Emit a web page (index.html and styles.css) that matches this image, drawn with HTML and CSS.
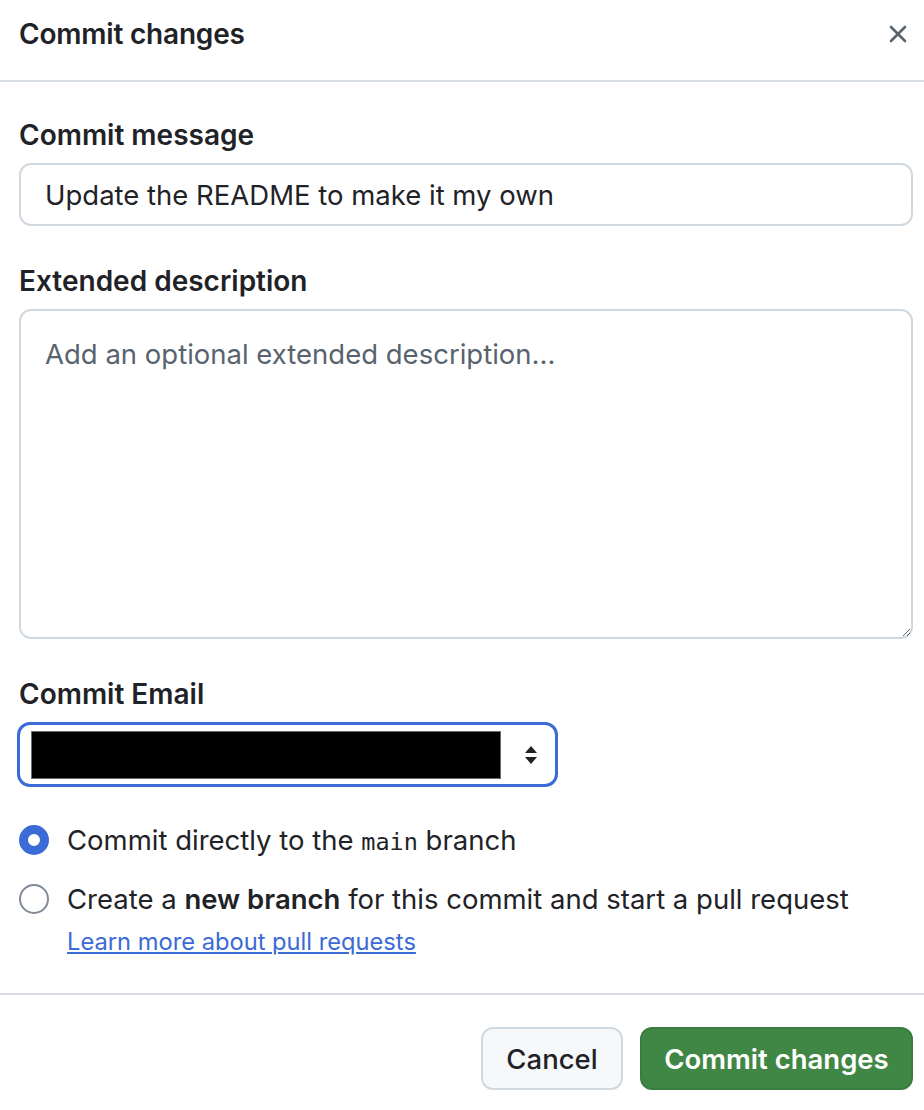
FILE: index.html
```html
<!DOCTYPE html>
<html lang="en">
<head>
<meta charset="utf-8">
<title>Commit changes</title>
<link rel="stylesheet" href="styles.css">
</head>
<body>
<div class="dialog">
  <header class="dialog-header">
    <h1 class="dialog-title">Commit changes</h1>
    <button class="close-btn" aria-label="Close">
      <svg width="20" height="20" viewBox="0 0 20 20" aria-hidden="true"><path d="M3 3 L17 17 M17 3 L3 17" stroke="#59636e" stroke-width="2.6" stroke-linecap="round" fill="none"/></svg>
    </button>
  </header>
  <div class="dialog-body">
    <div class="field">
      <label class="field-label" for="msg">Commit message</label>
      <input id="msg" class="text-input" type="text" value="Update the README to make it my own">
    </div>
    <div class="field">
      <label class="field-label" for="desc">Extended description</label>
      <textarea id="desc" class="text-area" placeholder="Add an optional extended description..."></textarea>
    </div>
    <div class="field">
      <label class="field-label">Commit Email</label>
      <div class="select">
        <span class="redacted"></span>
        <svg class="select-arrows" width="16" height="24" viewBox="0 0 16 24" aria-hidden="true"><path d="M8 3 L14 10 L2 10 Z M2 14 L14 14 L8 21 Z" fill="#1f2328"/></svg>
      </div>
    </div>
    <div class="choices">
      <div class="choice">
        <span class="radio radio-checked"></span>
        <span class="choice-text">Commit directly to the <code class="code">main</code> branch</span>
      </div>
      <div class="choice">
        <span class="radio"></span>
        <div class="choice-col">
          <span class="choice-text">Create a <strong>new branch</strong> for this commit and start a pull request</span>
          <a class="link" href="#">Learn more about pull requests</a>
        </div>
      </div>
    </div>
  </div>
  <footer class="dialog-footer">
    <button class="btn btn-default">Cancel</button>
    <button class="btn btn-primary">Commit changes</button>
  </footer>
</div>
</body>
</html>
```
FILE: styles.css
```css
* { box-sizing: border-box; }
html, body { margin: 0; padding: 0; background: #ffffff; }
body {
  font-family: Inter, "Liberation Sans", Arial, sans-serif;
  color: #1f2328;
  width: 924px;
  height: 1110px;
  overflow: hidden;
}
.dialog { width: 924px; }
.dialog-header {
  height: 82px;
  border-bottom: 2px solid #d8dee4;
  display: flex;
  align-items: flex-start;
  justify-content: space-between;
  padding: 16px 14px 0 19px;
}
.dialog-title {
  margin: 0;
  font-size: 28px;
  line-height: 36px;
  font-weight: 600;
  letter-spacing: -0.2px;
}
.close-btn {
  border: 0;
  background: none;
  padding: 0;
  margin-top: 6px;
  width: 24px;
  height: 24px;
  display: flex;
  align-items: center;
  justify-content: center;
}
.dialog-body {
  padding: 35px 11px 0 19px;
}
.field { display: flex; flex-direction: column; }
.field + .field { margin-top: 37px; }
.field-label {
  font-size: 28px;
  line-height: 36px;
  font-weight: 600;
  margin-bottom: 10px;
}
.text-input, .text-area {
  font-family: Inter, "Liberation Sans", Arial, sans-serif;
  font-size: 27.5px;
  color: #1f2328;
  border: 2px solid #d1d9e0;
  border-radius: 12px;
  background: #fff;
  width: 100%;
  outline: none;
}
.text-input {
  height: 63px;
  padding: 0 24px;
}
.text-area {
  height: 330px;
  padding: 25px 24px;
  line-height: 36px;
  resize: vertical;
}
.text-area::placeholder { color: #59636e; }
.select {
  width: 541px;
  height: 65px;
  margin-left: -2px;
  border: 3px solid #3a6bd6;
  border-radius: 13px;
  display: flex;
  align-items: center;
  padding: 0 16px 0 11px;
  justify-content: space-between;
}
.redacted {
  display: block;
  width: 470px;
  height: 48px;
  background: #000;
  border: 1px solid #6b6b6b;
}
.choices {
  margin-top: 33px;
  display: flex;
  flex-direction: column;
  gap: 17px;
}
.choice {
  display: flex;
  align-items: flex-start;
  gap: 18px;
}
.choice-col { display: flex; flex-direction: column; }
.choice-text {
  font-size: 27.5px;
  line-height: 40px;
}
.choice-text strong { font-weight: 600; }
.code {
  font-family: "DejaVu Sans Mono", "Liberation Mono", monospace;
  font-size: 23.5px;
}
.radio {
  flex: none;
  width: 30px;
  height: 30px;
  border-radius: 50%;
  border: 2px solid #818b98;
  margin-top: 5px;
  background: #fff;
}
.radio-checked {
  border: 9px solid #3a6bd6;
}
.link {
  font-size: 23.7px;
  line-height: 32px;
  color: #3a6bd6;
  text-decoration: underline;
  margin-top: 7px;
}
.dialog-footer {
  margin-top: 35px;
  border-top: 2px solid #d8dee4;
  display: flex;
  justify-content: flex-end;
  gap: 17px;
  padding: 32px 11px 0 0;
}
.btn {
  font-family: Inter, "Liberation Sans", Arial, sans-serif;
  font-size: 27.5px;
  font-weight: 600;
  height: 63px;
  border-radius: 12px;
  padding: 0 20px;
}
.btn-default {
  background: #f6f8fa;
  color: #1f2328;
  border: 2px solid #d1d9e0;
  font-weight: 500;
  width: 142px;
}
.btn-primary {
  background: #408745;
  color: #fff;
  border: 2px solid #3b7d40;
  width: 273px;
}
```
